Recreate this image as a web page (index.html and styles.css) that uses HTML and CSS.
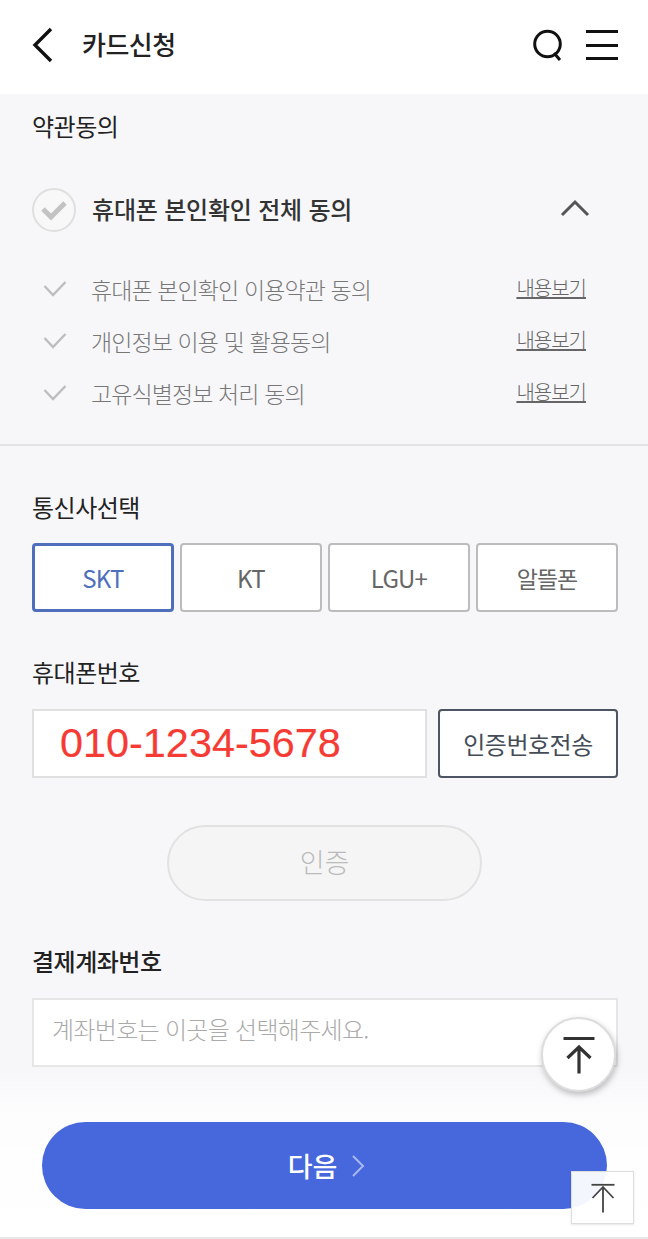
FILE: index.html
```html
<!DOCTYPE html>
<html lang="ko">
<head>
    <title>카드신청</title>
    <link rel="stylesheet" href="styles.css">
</head>
<body>
    <div class="page">
        <header class="header">
            <svg class="back" width="22" height="36" viewBox="0 0 22 36"><path d="M19 2 L3 18 L19 34" fill="none" stroke="#111" stroke-width="3.4"/></svg>
            <h1>카드신청</h1>
            <svg class="search" width="32" height="34" viewBox="0 0 32 34"><circle cx="15.5" cy="16" r="12.8" fill="none" stroke="#111" stroke-width="3"/><path d="M22 25 L28 32" stroke="#111" stroke-width="3"/></svg>
            <div class="menu"><span></span><span></span><span></span></div>
        </header>

        <section class="terms">
            <h2 class="terms-title">약관동의</h2>
            <div class="all-row">
                <span class="circle">
                    <svg width="28" height="22" viewBox="0 0 28 22"><path d="M3 10 L11 18 L25 4" fill="none" stroke="#c3c3c3" stroke-width="5"/></svg>
                </span>
                <strong>휴대폰 본인확인 전체 동의</strong>
                <svg class="chevron" width="30" height="18" viewBox="0 0 30 18"><path d="M2 16 L15 3 L28 16" fill="none" stroke="#555" stroke-width="3"/></svg>
            </div>
            <ul class="term-list">
                <li>
                    <svg width="24" height="18" viewBox="0 0 24 18"><path d="M1.5 6 L10 15 L22.5 2" fill="none" stroke="#bdbdbd" stroke-width="2.4"/></svg>
                    <span class="term-name">휴대폰 본인확인 이용약관 동의</span>
                    <a href="#">내용보기</a>
                </li>
                <li>
                    <svg width="24" height="18" viewBox="0 0 24 18"><path d="M1.5 6 L10 15 L22.5 2" fill="none" stroke="#bdbdbd" stroke-width="2.4"/></svg>
                    <span class="term-name">개인정보 이용 및 활용동의</span>
                    <a href="#">내용보기</a>
                </li>
                <li>
                    <svg width="24" height="18" viewBox="0 0 24 18"><path d="M1.5 6 L10 15 L22.5 2" fill="none" stroke="#bdbdbd" stroke-width="2.4"/></svg>
                    <span class="term-name">고유식별정보 처리 동의</span>
                    <a href="#">내용보기</a>
                </li>
            </ul>
        </section>

        <section class="form">
            <h2 class="label">통신사선택</h2>
            <div class="carriers">
                <button class="carrier active">SKT</button>
                <button class="carrier">KT</button>
                <button class="carrier">LGU+</button>
                <button class="carrier carrier-kr">알뜰폰</button>
            </div>

            <h2 class="label phone-label">휴대폰번호</h2>
            <div class="phone-row">
                <div class="phone-input">010-1234-5678</div>
                <button class="send-btn">인증번호전송</button>
            </div>

            <button class="verify-btn">인증</button>

            <h2 class="label account-label">결제계좌번호</h2>
            <div class="account-input">계좌번호는 이곳을 선택해주세요.</div>
        </section>

        <div class="bottom">
            <button class="next-btn">다음
                <svg width="14" height="24" viewBox="0 0 14 24"><path d="M2 2 L12 12 L2 22" fill="none" stroke="#a9b8ee" stroke-width="2"/></svg>
            </button>
        </div>

        <button class="top-round">
            <svg width="34" height="40" viewBox="0 0 34 40"><path d="M1.500 3.500 H32.500" stroke="#333" stroke-width="3"/><path d="M17 38.500 V12.500 M5.500 23 L17 12 L28.500 23" fill="none" stroke="#333" stroke-width="3.200"/></svg>
        </button>
        <button class="top-square">
            <svg width="26" height="32" viewBox="0 0 26 32"><path d="M1.500 2.800 H24.500" stroke="#444" stroke-width="1.800"/><path d="M13 30.500 V5 M2.500 16 L13 5 L23.500 16" fill="none" stroke="#444" stroke-width="1.800"/></svg>
        </button>
    </div>
</body>
</html>
```
FILE: styles.css
```css
* {
    box-sizing: border-box;
}

html, body {
    margin: 0;
    padding: 0;
}

body {
    font-family: "Noto Sans CJK KR", "Noto Sans", sans-serif;
    background-color: #f7f7fa;
}

h1, h2, ul {
    margin: 0;
    padding: 0;
}

button {
    font-family: inherit;
    padding: 0;
    cursor: pointer;
}

.page {
    position: relative;
    width: 648px;
    height: 1239px;
    overflow: hidden;
}

.header {
    display: flex;
    align-items: center;
    height: 94px;
    padding: 0 30px 4px 32px;
    background: white;
}

.header h1 {
    margin-left: 28px;
    margin-bottom: 3px;
    font-size: 26px;
    font-weight: 500;
    letter-spacing: -0.5px;
    color: #222;
}

.search {
    margin-left: auto;
}

.menu {
    display: flex;
    flex-direction: column;
    justify-content: space-between;
    width: 32px;
    height: 30px;
    margin-left: 22px;
}

.menu span {
    height: 3px;
    background: #111;
}

.terms {
    height: 352px;
    padding: 12px 32px 0;
    border-bottom: 2px solid #e3e3e5;
}

.terms-title, .label {
    font-size: 24px;
    line-height: 40px;
    font-weight: 400;
    letter-spacing: -0.5px;
    color: #222;
}

.all-row {
    display: flex;
    align-items: center;
    height: 44px;
    margin-top: 42px;
}

.circle {
    display: flex;
    align-items: center;
    justify-content: center;
    width: 44px;
    height: 44px;
    border: 2px solid #dfdfdf;
    border-radius: 50%;
    background: #f8f8f8;
}

.all-row strong {
    margin-left: 16px;
    margin-bottom: 4px;
    font-size: 24px;
    font-weight: 500;
    letter-spacing: -0.2px;
    color: #333;
}

.chevron {
    margin-left: auto;
    margin-right: 26px;
    margin-bottom: 4px;
}

.term-list {
    list-style: none;
    margin-top: 31px;
}

.term-list li {
    display: flex;
    align-items: center;
    height: 52px;
    padding-left: 11px;
}

.term-name {
    margin-left: 24px;
    font-size: 23px;
    font-weight: 300;
    letter-spacing: -0.9px;
    color: #777;
}

.term-list a {
    margin-left: auto;
    margin-right: 30px;
    margin-bottom: 4px;
    font-size: 20px;
    font-weight: 300;
    letter-spacing: -1px;
    color: #666;
    white-space: nowrap;
}

.form {
    padding: 41px 30px 0 32px;
}

.carriers {
    display: grid;
    grid-template-columns: repeat(4, 1fr);
    gap: 6px;
    margin-top: 16px;
}

.carrier {
    height: 69px;
    background: white;
    border: 2px solid #bcbcbc;
    border-radius: 4px;
    font-size: 24px;
    letter-spacing: -0.8px;
    color: #666;
}

.carrier.active {
    border: 3px solid #4f6fbd;
    color: #4f6fbd;
}

.carrier-kr {
    font-size: 23px;
    letter-spacing: -1px;
}

.phone-label {
    margin-top: 40px;
}

.phone-row {
    display: flex;
    gap: 11px;
    margin-top: 17px;
}

.phone-input {
    width: 395px;
    height: 69px;
    padding-left: 26px;
    background: white;
    border: 2px solid #e0e0e0;
    font-family: "Liberation Sans", Arial, sans-serif;
    font-size: 41.4px;
    line-height: 64px;
    color: #f63b34;
    -webkit-text-stroke: 0.2px #f63b34;
}

.send-btn {
    flex: 1;
    background: white;
    border: 2px solid #4b5563;
    border-radius: 4px;
    font-size: 24px;
    letter-spacing: -0.5px;
    color: #444c58;
}

.verify-btn {
    display: block;
    width: 315px;
    height: 76px;
    margin: 47px auto 0 135px;
    padding-bottom: 4px;
    background: #f5f5f5;
    border: 2px solid #e2e2e2;
    border-radius: 38px;
    font-size: 27px;
    font-weight: 300;
    color: #bbb;
}

.account-label {
    margin-top: 40px;
    font-weight: 500;
}

.account-input {
    height: 69px;
    margin-top: 17px;
    padding-left: 18px;
    background: white;
    border: 2px solid #e6e6e6;
    font-size: 24px;
    font-weight: 300;
    line-height: 58px;
    letter-spacing: -0.7px;
    color: #aaa;
}

/* bottom overlay */
.bottom {
    position: absolute;
    left: 0;
    right: 0;
    bottom: 0;
    height: 165px;
    padding: 48px 41px 0 42px;
    background: linear-gradient(rgba(255,255,255,0.1), rgba(255,255,255,0.75) 25%, #fff);
    border-bottom: 2px solid #e8e8e8;
}

.next-btn {
    display: flex;
    align-items: center;
    justify-content: center;
    gap: 14px;
    width: 100%;
    height: 87px;
    padding-left: 4px;
    background: #4668dc;
    border: none;
    border-radius: 44px;
    font-size: 27px;
    font-weight: 500;
    color: white;
}

.top-round {
    position: absolute;
    left: 541px;
    top: 1017px;
    display: flex;
    align-items: center;
    justify-content: center;
    width: 75px;
    height: 75px;
    background: white;
    border: 2px solid #ddd;
    border-radius: 50%;
    box-shadow: 1px 3px 6px rgba(0,0,0,0.25);
}

.top-square {
    position: absolute;
    left: 571px;
    top: 1171px;
    display: flex;
    align-items: center;
    justify-content: center;
    width: 63px;
    height: 53px;
    background: rgba(255,255,255,0.94);
    border: 1px solid #ddd;
    box-shadow: 0 1px 2px rgba(0,0,0,0.1);
}
```
